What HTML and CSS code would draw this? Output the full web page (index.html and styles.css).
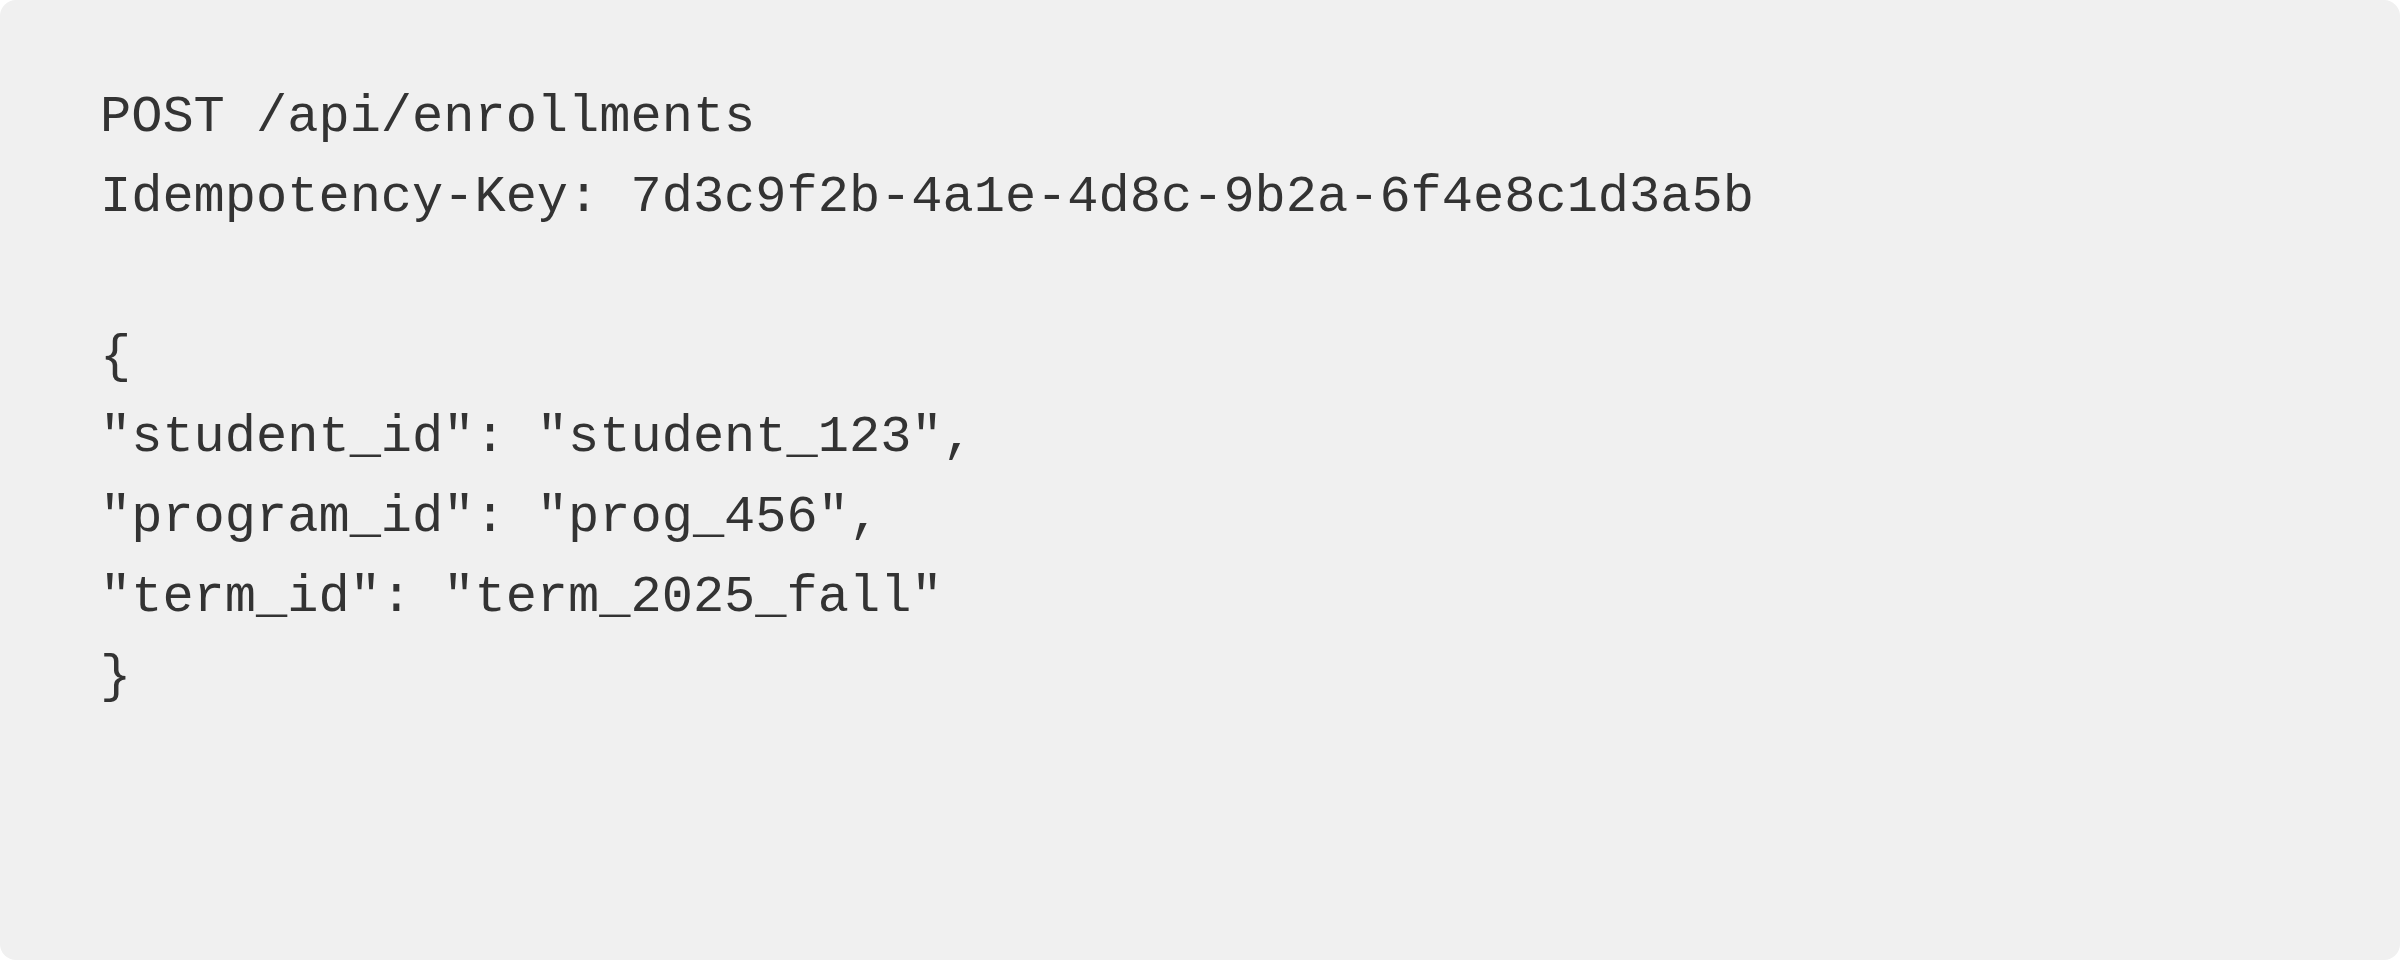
FILE: index.html
```html
<!DOCTYPE html>
<html lang="en">
<head>
<meta charset="utf-8">
<title>Request</title>
<link rel="stylesheet" href="styles.css">
</head>
<body>
<div class="card">
<pre class="code">POST /api/enrollments
Idempotency-Key: 7d3c9f2b-4a1e-4d8c-9b2a-6f4e8c1d3a5b

{
"student_id": "student_123",
"program_id": "prog_456",
"term_id": "term_2025_fall"
}</pre>
</div>
</body>
</html>
```
FILE: styles.css
```css
html, body {
  margin: 0;
  padding: 0;
  background: #ffffff;
}
.card {
  width: 2400px;
  height: 960px;
  box-sizing: border-box;
  background: #f0f0f0;
  border-radius: 16px;
  padding: 78px 100px;
}
.code {
  margin: 0;
  font-family: "Liberation Mono", monospace;
  font-size: 52px;
  line-height: 80px;
  color: #333333;
}
```
